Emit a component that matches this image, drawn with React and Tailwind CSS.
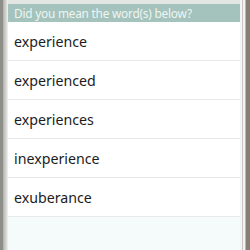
export default function App() {
  const words = ["experience", "experienced", "experiences", "inexperience", "exuberance"];
  return (
    <div className="w-[250px] h-[250px] flex overflow-hidden bg-[#8a867c]" style={{ fontFamily: '"Noto Sans", "Open Sans", sans-serif' }}>
      <div className="w-[3px] h-full bg-[#8e8e88]" />
      <div className="w-[5px] h-full bg-gradient-to-r from-[#b0b0ac] to-[#f0f0f0]" />
      <div className="flex-1 flex flex-col bg-[#f5fbfb]">
        <div className="h-[4px] bg-[#e4e6e4]" />
        <div className="h-[18px] bg-[#a4c3bc] text-[#eef5f3] text-[11.8px] tracking-[-0.2px] leading-[18px] pl-[6px]">
          Did you mean the word(s) below?
        </div>
        {words.map((w) => (
          <div key={w} className="h-[39px] bg-white border-b border-[#e8e8e8] flex items-center pl-[6px] pt-[1px] text-[14.2px] text-[#1c1c1c]">
            {w}
          </div>
        ))}
      </div>
      <div className="w-[2px] h-full bg-[#f4f4f4]" />
      <div className="w-[1px] h-full bg-[#c8c8c8]" />
      <div className="w-[2px] h-full bg-[#f2f2f2]" />
      <div className="w-[1px] h-full bg-[#b8b8b4]" />
      <div className="w-[4px] h-full bg-[#858073]" />
    </div>
  );
}
